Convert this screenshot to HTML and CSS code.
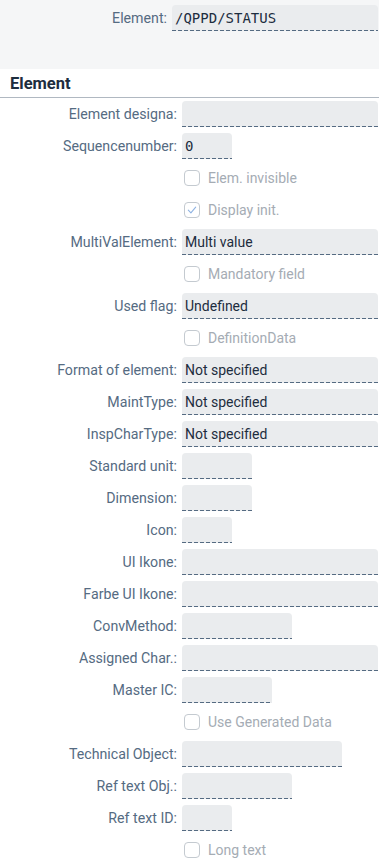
FILE: index.html
```html
<!DOCTYPE html>
<html>
<head>
<meta charset="utf-8">
<link rel="stylesheet" href="styles.css">
</head>
<body>
<div class="header">
  <div class="hrow">
    <label class="label">Element:</label>
    <div class="input full mono">/QPPD/STATUS</div>
  </div>
</div>
<div class="section">
  <div class="title">Element</div>
  <div class="form">
    <label class="label">Element designa:</label><div class="field"><div class="input full"></div></div>
    <label class="label">Sequencenumber:</label><div class="field"><div class="input w50 mono">0</div></div>
    <span></span><div class="field"><span class="cb"></span><span class="cbtext">Elem. invisible</span></div>
    <span></span><div class="field"><span class="cb"><svg viewBox="0 0 16 16" width="16" height="16"><path d="M4.3 8.2 L6.9 10.9 L11.7 5.2" fill="none" stroke="#8fb3e3" stroke-width="1.1" stroke-linecap="round" stroke-linejoin="round"/></svg></span><span class="cbtext">Display init.</span></div>
    <label class="label">MultiValElement:</label><div class="field"><div class="input full">Multi value</div></div>
    <span></span><div class="field"><span class="cb"></span><span class="cbtext">Mandatory field</span></div>
    <label class="label">Used flag:</label><div class="field"><div class="input full">Undefined</div></div>
    <span></span><div class="field"><span class="cb"></span><span class="cbtext">DefinitionData</span></div>
    <label class="label">Format of element:</label><div class="field"><div class="input full">Not specified</div></div>
    <label class="label">MaintType:</label><div class="field"><div class="input full">Not specified</div></div>
    <label class="label">InspCharType:</label><div class="field"><div class="input full">Not specified</div></div>
    <label class="label">Standard unit:</label><div class="field"><div class="input w70"></div></div>
    <label class="label">Dimension:</label><div class="field"><div class="input w70"></div></div>
    <label class="label">Icon:</label><div class="field"><div class="input w50"></div></div>
    <label class="label">UI Ikone:</label><div class="field"><div class="input full"></div></div>
    <label class="label">Farbe UI Ikone:</label><div class="field"><div class="input full"></div></div>
    <label class="label">ConvMethod:</label><div class="field"><div class="input w110"></div></div>
    <label class="label">Assigned Char.:</label><div class="field"><div class="input full"></div></div>
    <label class="label">Master IC:</label><div class="field"><div class="input w90"></div></div>
    <span></span><div class="field"><span class="cb"></span><span class="cbtext">Use Generated Data</span></div>
    <label class="label">Technical Object:</label><div class="field"><div class="input w160"></div></div>
    <label class="label">Ref text Obj.:</label><div class="field"><div class="input w110"></div></div>
    <label class="label">Ref text ID:</label><div class="field"><div class="input w50"></div></div>
    <span></span><div class="field"><span class="cb"></span><span class="cbtext">Long text</span></div>
  </div>
</div>
</body>
</html>
```
FILE: styles.css
```css
html, body {
  margin: 0;
  padding: 0;
  background: #ffffff;
  font-family: Roboto, "Liberation Sans", sans-serif;
  font-size: 14px;
  color: #32363a;
  overflow: hidden;
}
.header {
  background: #f5f6f7;
  height: 69px;
  box-sizing: border-box;
  padding-top: 5px;
}
.hrow {
  display: grid;
  grid-template-columns: 167px 1fr;
  column-gap: 5px;
  height: 26px;
}
.label {
  color: #556b82;
  text-align: right;
  white-space: nowrap;
  display: flex;
  align-items: center;
  justify-content: flex-end;
  height: 26px;
  font-size: 14.2px;
}
.input {
  box-sizing: border-box;
  height: 26px;
  background-color: #eaecee;
  border-radius: 4px 4px 0 0;
  background-image: repeating-linear-gradient(to right, #556b82 0 4px, transparent 4px 6px);
  background-size: 100% 1px;
  background-position: left bottom;
  background-repeat: no-repeat;
  padding: 0 4px 1px 3px;
  display: flex;
  align-items: center;
  color: #1d2d3e;
  white-space: nowrap;
  overflow: hidden;
}
.mono {
  font-family: "DejaVu Sans Mono", "Liberation Mono", monospace;
  font-size: 14px;
}
.full { width: auto; margin-right: 1px; }
.w50 { width: 50px; }
.w70 { width: 70px; }
.w90 { width: 90px; }
.w110 { width: 110px; }
.w160 { width: 160px; }
.section {
  background: #ffffff;
}
.title {
  height: 29px;
  box-sizing: border-box;
  border-bottom: 1px solid #b0b8c1;
  padding-left: 10px;
  font-weight: bold;
  font-size: 16.5px;
  color: #1d2d3e;
  display: flex;
  align-items: center;
  padding-top: 1px;
}
.form {
  display: grid;
  grid-template-columns: 177px 1fr;
  column-gap: 5px;
  row-gap: 6px;
  padding-top: 3px;
}
.field {
  display: flex;
  align-items: center;
  height: 26px;
  min-width: 0;
}
.field .input.full { flex: 1; }
.cb {
  box-sizing: border-box;
  width: 16px;
  height: 16px;
  border: 1px solid #c4cad0;
  border-radius: 4px;
  margin-left: 2px;
  background: #ffffff;
  display: flex;
}
.cb svg { margin: -1px; }
.cbtext {
  margin-left: 8px;
  color: #a5acb4;
}
```
